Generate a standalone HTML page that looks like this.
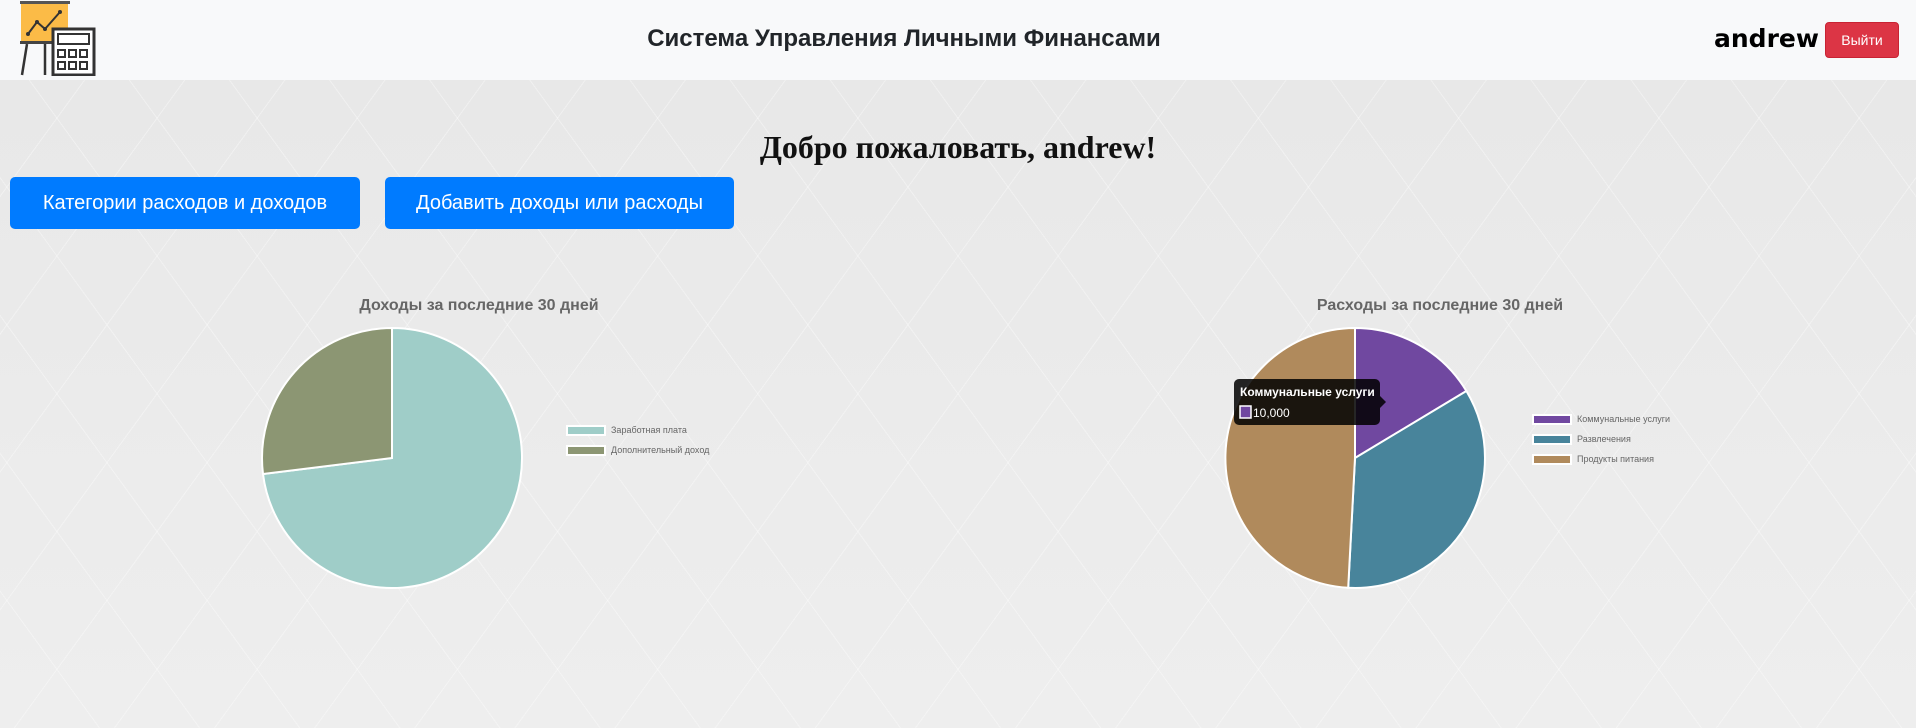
<!DOCTYPE html>
<html><head><meta charset="utf-8">
<style>
*{margin:0;padding:0;box-sizing:border-box}
body{width:1916px;height:728px;overflow:hidden;font-family:"Liberation Sans","DejaVu Sans",sans-serif;background:#ebebeb;position:relative}
.bg{position:absolute;left:0;top:80px;width:1916px;height:648px;
background:
repeating-linear-gradient(54deg,transparent 0 80px,rgba(255,255,255,.35) 80px 81px),
repeating-linear-gradient(-54deg,transparent 0 80px,rgba(255,255,255,.35) 80px 81px),
linear-gradient(180deg,#e8e8e8,#eeeeee);}
header{position:absolute;left:0;top:0;width:1916px;height:80px;background:#f8f9fa}
.title{position:absolute;left:604px;width:600px;top:25px;text-align:center;font-weight:bold;font-size:24px;color:#212529}
.user{position:absolute;left:1714px;top:24px;font-family:"DejaVu Sans",sans-serif;font-weight:bold;font-size:25px;color:#000}
.out{position:absolute;left:1825px;top:22px;width:74px;height:36px;background:#dc3545;border:1px solid #c82333;border-radius:4px;color:#fff;font-size:14px;text-align:center;line-height:34px}
h1{position:absolute;left:0;width:1916px;top:129px;text-align:center;font-family:"Liberation Serif",serif;font-size:32px;font-weight:bold;color:#111}
.btn{position:absolute;top:177px;height:52px;background:#007bff;border-radius:5px;color:#fff;font-size:20px;text-align:center;line-height:52px}
.ct{position:absolute;top:297px;font-weight:bold;font-size:16px;color:#666;text-align:center;width:400px}
.lg{position:absolute;font-size:9px;color:#666}
.lg div{height:20px;position:relative;padding-left:45px;line-height:10px}
.lg span{position:absolute;left:0;top:0;width:40px;height:11px;border:2px solid #fff}
</style></head><body>
<div class="bg"></div>
<header>
<svg style="position:absolute;left:19px;top:0" width="78" height="76" viewBox="0 0 78 76">
<rect x="1" y="1" width="50" height="3" fill="#555"/>
<rect x="2" y="4" width="47" height="37" fill="#fbbb47"/>
<rect x="1" y="41" width="36" height="3" fill="#444"/>
<polyline points="9,34 18,22 26,29 41,12" fill="none" stroke="#333" stroke-width="2"/>
<circle cx="9" cy="34" r="2" fill="#333"/><circle cx="18" cy="22" r="2" fill="#333"/><circle cx="26" cy="29" r="2" fill="#333"/><circle cx="41" cy="12" r="2" fill="#333"/>
<line x1="8" y1="44" x2="3" y2="75" stroke="#333" stroke-width="2.5"/>
<line x1="26" y1="44" x2="26" y2="75" stroke="#333" stroke-width="2.5"/>
<rect x="34" y="29" width="41" height="46" fill="#fff" stroke="#333" stroke-width="3"/>
<rect x="39" y="34" width="31" height="10" fill="none" stroke="#333" stroke-width="2"/>
<g fill="none" stroke="#333" stroke-width="2">
<rect x="39" y="50" width="7" height="7"/><rect x="50" y="50" width="7" height="7"/><rect x="61" y="50" width="7" height="7"/>
<rect x="39" y="62" width="7" height="7"/><rect x="50" y="62" width="7" height="7"/><rect x="61" y="62" width="7" height="7"/>
</g></svg>
<div class="title">Система Управления Личными Финансами</div>
<div class="user">andrew</div>
<div class="out">Выйти</div>
</header>
<h1>Добро пожаловать, andrew!</h1>
<div class="btn" style="left:10px;width:350px">Категории расходов и доходов</div>
<div class="btn" style="left:385px;width:349px">Добавить доходы или расходы</div>

<div class="ct" style="left:279px">Доходы за последние 30 дней</div>
<div class="ct" style="left:1240px">Расходы за последние 30 дней</div>

<svg style="position:absolute;left:0;top:0" width="1916" height="728">
<g stroke="#fff" stroke-width="2">
<path d="M392,458 L392,328 A130,130 0 1 1 263,474 Z" fill="#9fcdc8"/>
<path d="M392,458 L263,474 A130,130 0 0 1 392,328 Z" fill="#8c9673"/>
<path d="M1355,458 L1355,328 A130,130 0 0 1 1466.4,391 Z" fill="#7048a0"/>
<path d="M1355,458 L1466.4,391 A130,130 0 0 1 1348.2,587.8 Z" fill="#48849b"/>
<path d="M1355,458 L1348.2,587.8 A130,130 0 0 1 1355,328 Z" fill="#b08a5c"/>
</g>
<rect x="1234" y="379" width="146" height="46" rx="5" fill="rgba(0,0,0,.85)"/>
<polygon points="1380,396 1386,402 1380,408" fill="rgba(0,0,0,.85)"/>
<text x="1240" y="396" fill="#fff" font-family="Liberation Sans" font-weight="bold" font-size="12">Коммунальные услуги</text>
<rect x="1240" y="406" width="11" height="12" fill="#7048a0" stroke="#fff" stroke-width="1.5"/>
<text x="1253" y="417" fill="#fff" font-family="Liberation Sans" font-size="12">10,000</text>
</svg>

<div class="lg" style="left:566px;top:425px">
<div><span style="background:#9fcdc8"></span>Заработная плата</div>
<div><span style="background:#8c9673"></span>Дополнительный доход</div>
</div>
<div class="lg" style="left:1532px;top:414px">
<div><span style="background:#7048a0"></span>Коммунальные услуги</div>
<div><span style="background:#48849b"></span>Развлечения</div>
<div><span style="background:#b08a5c"></span>Продукты питания</div>
</div>
</body></html>
